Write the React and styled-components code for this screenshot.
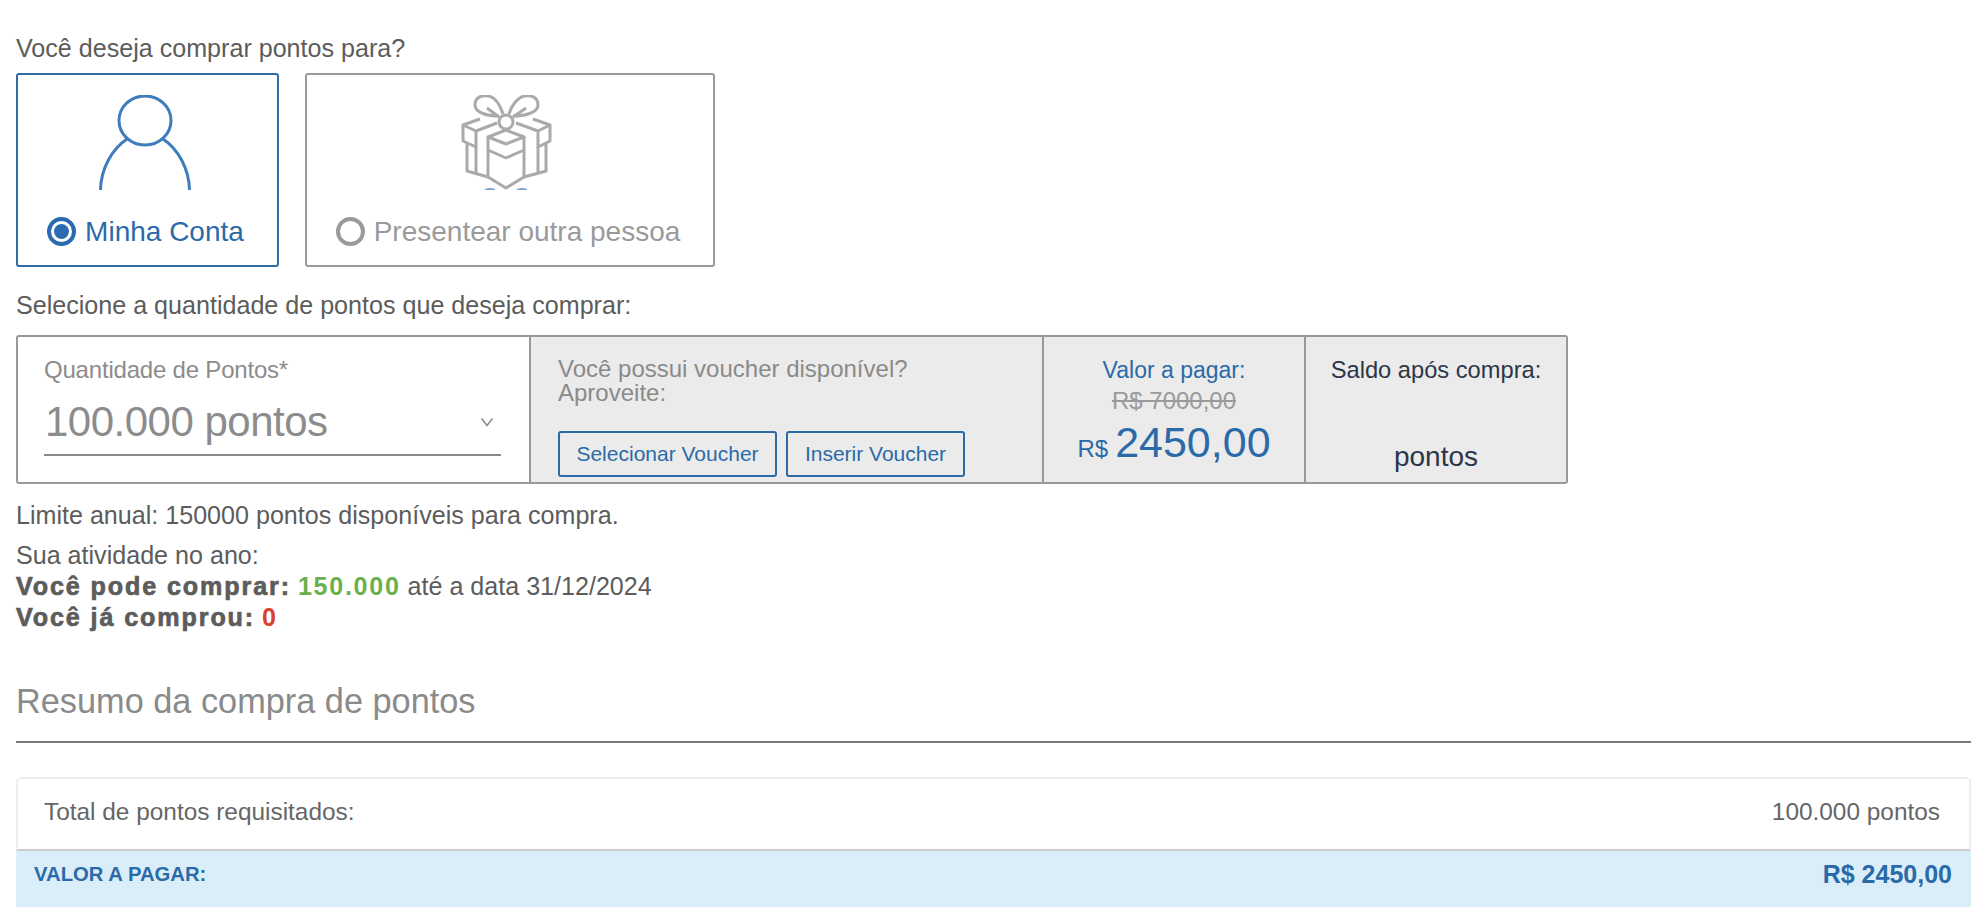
import React from 'react';
import styled, { createGlobalStyle } from 'styled-components';

const GlobalStyle = createGlobalStyle`
html, body {
  margin: 0;
  padding: 0;
  background: #fff;
  overflow: hidden;
}
* { box-sizing: border-box; }
`;

const Page = styled.div`
height: 916px;
overflow: hidden;
padding: 36px 13px 0 16px;
font-family: "Liberation Sans", Arial, sans-serif;
color: #5c5c5c;
`;

const Question = styled.div`
font-size: 25.1px;
line-height: 24px;
margin-top: ${(p) => p.$top || 0}px;
`;

const Cards = styled.div`
display: flex;
gap: 26px;
margin-top: 13px;
`;

const Card = styled.div`
width: ${(p) => p.$width}px;
height: 194px;
border: 2px solid ${(p) => (p.$active ? '#2f6ba8' : '#9a9a9a')};
border-radius: 3px;
padding-top: 20px;
display: flex;
flex-direction: column;
align-items: center;
`;

const IconBox = styled.div`
height: 95px;
margin-right: 6px;
overflow: hidden;
display: flex;
justify-content: center;
`;

const RadioRow = styled.div`
display: flex;
align-items: center;
gap: 9px;
margin-top: 27px;
padding-right: 4px;
font-size: 28px;
line-height: 29px;
color: ${(p) => (p.$active ? '#2a6aa8' : '#9a9a9a')};
`;

const Radio = styled.span`
width: 29px;
height: 29px;
border-radius: 50%;
border: 4px solid ${(p) => (p.$active ? '#2a6ab0' : '#9a9a9a')};
display: flex;
align-items: center;
justify-content: center;
&::after {
  content: '';
  display: ${(p) => (p.$active ? 'block' : 'none')};
  width: 15px;
  height: 15px;
  border-radius: 50%;
  background: #2a6ab0;
}
`;

const BuyTable = styled.div`
display: grid;
grid-template-columns: 511px 513px 262px 1fr;
width: 1552px;
height: 149px;
margin-top: 18px;
border: 2px solid #999;
border-radius: 3px;
`;

const QuantityCell = styled.div`
padding: 21px 28px 0 26px;
`;

const FieldLabel = styled.div`
font-size: 24px;
line-height: 24px;
color: #8c8c8c;
letter-spacing: -0.2px;
`;

const SelectField = styled.div`
display: flex;
align-items: center;
justify-content: space-between;
height: 67px;
margin-top: 7px;
padding: 0 7px 0 1px;
border-bottom: 2px solid #8a8a8a;
font-size: 42px;
color: #8c8c8c;
letter-spacing: -0.5px;
`;

const GreyCell = styled.div`
background: #ebebeb;
border-left: 2px solid #999;
display: flex;
flex-direction: column;
align-items: ${(p) => (p.$center ? 'center' : 'stretch')};
padding: ${(p) => p.$pad};
`;

const VoucherText = styled.div`
font-size: 24px;
line-height: 24px;
color: #8a8a8a;
`;

const ButtonRow = styled.div`
display: flex;
gap: 9px;
margin-top: 26px;
`;

const VoucherButton = styled.button`
width: ${(p) => p.$width}px;
height: 46px;
padding: 0;
background: transparent;
border: 2px solid #2a6aa8;
border-radius: 3px;
color: #2a6aa8;
font-family: inherit;
font-size: 21px;
`;

const PayLabel = styled.div`
font-size: ${(p) => p.$size}px;
line-height: 24px;
color: ${(p) => p.$color};
`;

const OldPrice = styled.div`
margin-top: 7px;
font-size: 24px;
line-height: 24px;
color: #9a9a9a;
text-decoration: line-through;
`;

const Price = styled.div`
display: flex;
align-items: baseline;
gap: 7px;
margin-top: 4px;
font-size: 24px;
line-height: 50px;
color: #2a6aa8;
& > strong {
  font-size: 43px;
  font-weight: 400;
}
`;

const Points = styled.div`
margin-top: auto;
font-size: 28px;
line-height: 30px;
color: #2b3648;
`;

const Note = styled.div`
font-size: 25.1px;
line-height: 24px;
margin-top: 19px;
`;

const Activity = styled.div`
margin-top: 13px;
font-size: 25.1px;
line-height: 31px;
`;

const Strong = styled.span`
font-weight: 700;
letter-spacing: 1.9px;
-webkit-text-stroke: 0.7px #5c5c5c;
`;

const Count = styled.span`
font-weight: 700;
letter-spacing: 1.7px;
color: ${(p) => p.$color};
`;

const SummaryTitle = styled.h2`
margin: 50px 0 0;
padding-bottom: 22px;
font-size: 34.3px;
font-weight: 400;
line-height: 36px;
color: #8a8a8a;
border-bottom: 2px solid #777;
`;

const Panel = styled.div`
margin-top: 34px;
border-top: 2px solid #eee;
border-radius: 6px 6px 0 0;
width: 1955px;
`;

const TotalRow = styled.div`
display: flex;
align-items: center;
justify-content: space-between;
height: 72px;
padding: 0 29px 5px 26px;
border-left: 2px solid #eee;
border-right: 2px solid #eee;
border-bottom: 2px solid #ccc;
font-size: 24.4px;
color: #666;
`;

const PayRow = styled.div`
display: flex;
justify-content: space-between;
height: 56px;
padding: 11px 19px 0 18px;
background: #daeef9;
color: #2a6aa8;
font-weight: 700;
`;

const PayCaption = styled.span`
font-size: 20.3px;
line-height: 24px;
`;

const PayValue = styled.span`
font-size: 25px;
line-height: 24px;
`;

const PersonIcon = () => (
  <svg width="92" height="96" viewBox="0 0 92 96" fill="none" stroke="#3f7cbd" strokeWidth="3">
    <ellipse cx="46" cy="25.5" rx="26" ry="24.5" />
    <path d="M1.5 96 C1.5 74 13 54 28 44 M64 44 C79 54 90.5 74 90.5 96" />
  </svg>
);

const GiftIcon = () => (
  <svg width="94" height="95" viewBox="460 95 94 95" fill="none" stroke="#aaa" strokeWidth="3" strokeLinejoin="round">
    <circle cx="506" cy="122" r="7" />
    <path d="M499 116 C488 116 475 113 475 105 C475 97 482 95 488 96 C496 97 501 107 503 114" />
    <path d="M513 116 C524 116 538 113 538 105 C538 97 531 95 525 96 C517 97 511 107 509 114" />
    <path d="M487 108 L499 117 M526 108 L513 117" />
    <path d="M480 119 L463 125 L463 141 L476 147 L476 131 L463 125 M476 131 L497 123" />
    <path d="M533 119 L550 125 L550 141 L538 147 L538 131 L550 125 M538 131 L516 123" />
    <path d="M488 137 L506 130 L524 137 L506 144 Z" />
    <path d="M488 137 L488 177 L506 188 L524 177 L524 137" />
    <path d="M488 150 L506 158 L524 150" />
    <path d="M467 143 L467 171 L488 177 M476 147 L476 174" />
    <path d="M546 143 L546 171 L524 177 M538 147 L538 174" />
    <path d="M485 190 Q490 188 495 190 M517 190 Q522 188 527 190" stroke="#7fa6cc" strokeWidth="2" />
  </svg>
);

const Chevron = () => (
  <svg width="14" height="10" viewBox="0 0 14 10" fill="none" stroke="#8c8c8c" strokeWidth="1.6">
    <path d="M1.5 1.5 L7 8.5 L12.5 1.5" />
  </svg>
);

export default function App() {
  return (
    <Page>
      <GlobalStyle />
      <Question>Você deseja comprar pontos para?</Question>
      <Cards>
        <Card $width={263} $active>
          <IconBox><PersonIcon /></IconBox>
          <RadioRow $active><Radio $active />Minha Conta</RadioRow>
        </Card>
        <Card $width={410}>
          <IconBox><GiftIcon /></IconBox>
          <RadioRow><Radio />Presentear outra pessoa</RadioRow>
        </Card>
      </Cards>
      <Question $top={26}>Selecione a quantidade de pontos que deseja comprar:</Question>
      <BuyTable>
        <QuantityCell>
          <FieldLabel>Quantidade de Pontos*</FieldLabel>
          <SelectField>100.000 pontos<Chevron /></SelectField>
        </QuantityCell>
        <GreyCell $pad="20px 0 0 27px">
          <VoucherText>Você possui voucher disponível?<br />Aproveite:</VoucherText>
          <ButtonRow>
            <VoucherButton $width={219}>Selecionar Voucher</VoucherButton>
            <VoucherButton $width={179}>Inserir Voucher</VoucherButton>
          </ButtonRow>
        </GreyCell>
        <GreyCell $center $pad="21px 0 0">
          <PayLabel $size={23} $color="#2a6aa8">Valor a pagar:</PayLabel>
          <OldPrice>R$ 7000,00</OldPrice>
          <Price>R$<strong>2450,00</strong></Price>
        </GreyCell>
        <GreyCell $center $pad="21px 0 10px">
          <PayLabel $size={23.7} $color="#2b3648">Saldo após compra:</PayLabel>
          <Points>pontos</Points>
        </GreyCell>
      </BuyTable>
      <Note>Limite anual: 150000 pontos disponíveis para compra.</Note>
      <Activity>
        Sua atividade no ano:<br />
        <Strong>Você pode comprar:</Strong> <Count $color="#6ab04c">150.000</Count> até a data 31/12/2024<br />
        <Strong>Você já comprou:</Strong> <Count $color="#e03e2d">0</Count>
      </Activity>
      <SummaryTitle>Resumo da compra de pontos</SummaryTitle>
      <Panel>
        <TotalRow>
          <span>Total de pontos requisitados:</span>
          <span>100.000 pontos</span>
        </TotalRow>
        <PayRow>
          <PayCaption>VALOR A PAGAR:</PayCaption>
          <PayValue>R$ 2450,00</PayValue>
        </PayRow>
      </Panel>
    </Page>
  );
}
